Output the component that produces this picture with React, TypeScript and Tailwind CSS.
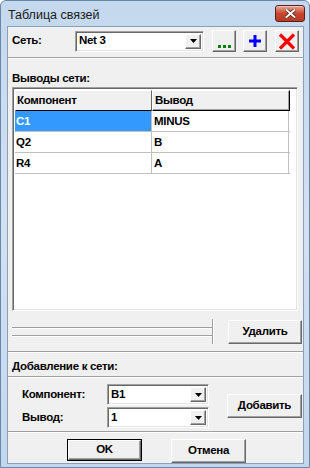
import React from 'react'

const raised =
  'border border-t-white border-l-white border-r-[#696969] border-b-[#696969] shadow-[inset_-1px_-1px_0_#a0a0a0] bg-[#f0f0f0]'
const sunken =
  'border border-t-[#a0a0a0] border-l-[#a0a0a0] border-r-white border-b-white shadow-[inset_1px_1px_0_#696969,inset_-1px_-1px_0_#e3e3e3]'

// bitmap-like bold UI text
const ui = "font-['Liberation_Sans',Arial,sans-serif] text-[11.5px] tracking-[-0.3px] font-bold"

function Separator() {
  return <div className="h-[2px] border-t border-t-[#a0a0a0] border-b border-b-white" />
}

function Combo({ value, width }: { value: string; width: string }) {
  return (
    <div className={`${sunken} ${width} h-[21px] bg-white flex items-center pl-[3px] pr-[2px]`}>
      <span className={`flex-1 ${ui} text-black leading-none`}>{value}</span>
      <div className={`${raised} w-[16px] h-[15px] flex items-center justify-center`}>
        <svg width="7" height="4" viewBox="0 0 7 4">
          <path d="M0 0h7L3.5 4z" fill="#000" />
        </svg>
      </div>
    </div>
  )
}

function Button({ label, width, className = '' }: { label: string; width: string; className?: string }) {
  return (
    <button className={`${raised} ${width} h-[24px] ${ui} text-black flex items-center justify-center ${className}`}>
      {label}
    </button>
  )
}

const rows = [
  { comp: 'C1', pin: 'MINUS', selected: true },
  { comp: 'Q2', pin: 'B' },
  { comp: 'R4', pin: 'A' },
]

export default function App() {
  return (
    <div className="w-[310px] h-[468px] flex flex-col border border-[#6b86a6] rounded-t-[6px] bg-gradient-to-b from-[#c4d8ee] via-[#d2e1f2] to-[#c2d7ed] font-['Liberation_Sans',Arial,sans-serif] overflow-hidden">
      {/* Title bar */}
      <div className="h-[27px] flex items-start pl-[7px] pr-[4px]">
        <span className="mt-[8px] text-[12.5px] text-[#1a1a1a] leading-none">Таблица связей</span>
        <div className="ml-auto mt-[4px] w-[30px] h-[17px] rounded-[3px] border border-[#5b1f1a] bg-gradient-to-b from-[#e9a593] via-[#c9462f] to-[#b83a25] flex items-center justify-center shadow-[inset_0_1px_0_#f3c4b6]">
          <svg width="11" height="9" viewBox="0 0 11 9">
            <path d="M1.5 1l8 7M9.5 1l-8 7" stroke="#3b1410" strokeWidth="3.2" strokeLinecap="square" />
            <path d="M1.5 1l8 7M9.5 1l-8 7" stroke="#fff" strokeWidth="2" strokeLinecap="square" />
          </svg>
        </div>
      </div>

      {/* Client area */}
      <div className="flex-1 ml-[6px] mr-[5px] mb-[3px] border border-[#8aa0ba] bg-[#f0f0f0] flex flex-col text-black">
        {/* Net row */}
        <div className="mt-[3px] h-[22px] pl-[4px] flex items-center">
          <span className={`w-[63px] ${ui}`}>Сеть:</span>
          <Combo value="Net 3" width="w-[129px]" />
          <div className={`${raised} ml-[8px] w-[24px] h-[22px] flex items-end justify-center pb-[3px]`}>
            <svg width="13" height="3" viewBox="0 0 13 3">
              <rect x="0" y="0" width="3" height="3" fill="#008000" />
              <rect x="5" y="0" width="3" height="3" fill="#008000" />
              <rect x="10" y="0" width="3" height="3" fill="#008000" />
            </svg>
          </div>
          <div className={`${raised} ml-[7px] w-[24px] h-[22px] flex items-center justify-center`}>
            <svg width="12" height="12" viewBox="0 0 12 12">
              <path d="M4.5 0h3v4.5H12v3H7.5V12h-3V7.5H0v-3h4.5z" fill="#0000ff" />
            </svg>
          </div>
          <div className={`${raised} ml-[8px] w-[24px] h-[22px] flex items-center justify-center`}>
            <svg width="18" height="17" viewBox="0 0 18 17">
              <path d="M2 1.5l14 14M16 1.5l-14 14" stroke="#ff0000" strokeWidth="3.2" />
            </svg>
          </div>
        </div>

        <div className="mt-[5px]">
          <Separator />
        </div>

        <div className={`mt-[12px] pl-[4px] h-[14px] ${ui} leading-[14px]`}>Выводы сети:</div>

        {/* Table */}
        <div className={`${sunken} mt-[2px] ml-[4px] w-[286px] h-[224px] bg-white p-[2px] pr-0`}>
          <div className="flex h-[21px] w-[275px]">
            <div className={`w-[137px] border border-t-white border-l-white border-b-black border-r-[#696969] bg-[#f0f0f0] ${ui} pl-[1px] leading-[19px]`}>
              Компонент
            </div>
            <div className={`w-[138px] border border-t-white border-l-white border-b-black border-r-black shadow-[inset_-1px_-1px_0_#a0a0a0] bg-[#f0f0f0] ${ui} pl-[2px] leading-[19px]`}>
              Вывод
            </div>
          </div>
          {rows.map((r) => (
            <div key={r.comp} className="flex h-[21px] w-[275px] border-b border-[#c0c0c0]">
              <div
                className={`w-[137px] border-r border-[#c0c0c0] ${ui} pl-[1px] leading-[20px] ${
                  r.selected ? 'bg-[#3399ff] text-white' : ''
                }`}
              >
                {r.comp}
              </div>
              <div className={`w-[137px] border-r border-[#c0c0c0] ${ui} pl-[2px] leading-[20px]`}>{r.pin}</div>
            </div>
          ))}
        </div>

        {/* Trackbar + delete */}
        <div className="mt-[8px] h-[25px] pl-[4px] flex items-center">
          <div className="w-[200px] h-[25px] flex flex-col justify-center gap-[6px]">
            <div className="h-[2px] border-t border-t-[#a0a0a0] border-b border-b-white" />
            <div className="h-[2px] border-t border-t-[#a0a0a0] border-b border-b-white" />
          </div>
          <div className="w-[2px] h-[25px] border-l border-l-[#a0a0a0] border-r border-r-white" />
          <Button label="Удалить" width="w-[74px]" className="ml-[14px]" />
        </div>

        <div className="mt-[7px]">
          <Separator />
        </div>

        <div className={`mt-[6px] pl-[4px] h-[14px] ${ui} leading-[14px]`}>Добавление к сети:</div>

        <div className="mt-[3px]">
          <Separator />
        </div>

        {/* Add block */}
        <div className="mt-[6px] h-[44px] pl-[14px] flex items-center">
          <div className="flex flex-col gap-[2px]">
            <div className="flex items-center">
              <span className={`w-[85px] ${ui}`}>Компонент:</span>
              <Combo value="B1" width="w-[102px]" />
            </div>
            <div className="flex items-center">
              <span className={`w-[85px] ${ui}`}>Вывод:</span>
              <Combo value="1" width="w-[102px]" />
            </div>
          </div>
          <Button label="Добавить" width="w-[75px]" className="ml-[18px]" />
        </div>

        <div className="mt-[3px]">
          <Separator />
        </div>

        {/* Dialog buttons */}
        <div className="mt-[6px] pl-[59px] flex gap-[29px]">
          <button className={`w-[75px] h-[22px] border border-black bg-[#f0f0f0] flex items-center justify-center ${ui}`}>
            <span className={`${raised} w-full h-full flex items-center justify-center`}>OK</span>
          </button>
          <Button label="Отмена" width="w-[75px]" className="h-[22px]" />
        </div>
      </div>
    </div>
  )
}
